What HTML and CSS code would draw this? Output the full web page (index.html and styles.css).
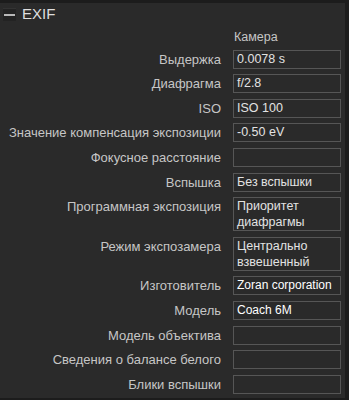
FILE: index.html
```html
<!DOCTYPE html>
<html lang="ru">

<head>
    <meta charset="UTF-8">
    <meta name="viewport" content="width=device-width, initial-scale=1.0">
    <title>EXIF</title>
    <link rel="stylesheet" href="styles.css">
</head>

<body>
    <div class="panel">
        <div class="panel-header">
            <span class="toggle"></span>
            <span class="panel-title">EXIF</span>
        </div>

        <div class="fields">
            <div class="caption">Камера</div>

            <div class="label">Выдержка</div>
            <div class="value">0.0078 s</div>

            <div class="label">Диафрагма</div>
            <div class="value">f/2.8</div>

            <div class="label">ISO</div>
            <div class="value">ISO 100</div>

            <div class="label">Значение компенсация экспозиции</div>
            <div class="value">-0.50 eV</div>

            <div class="label">Фокусное расстояние</div>
            <div class="value"></div>

            <div class="label">Вспышка</div>
            <div class="value">Без вспышки</div>

            <div class="label">Программная экспозиция</div>
            <div class="value multi">Приоритет<br>диафрагмы</div>

            <div class="label">Режим экспозамера</div>
            <div class="value multi">Центрально<br>взвешенный</div>

            <div class="label">Изготовитель</div>
            <div class="value edit">Zoran corporation</div>

            <div class="label">Модель</div>
            <div class="value edit">Coach 6M</div>

            <div class="label">Модель объектива</div>
            <div class="value"></div>

            <div class="label">Сведения о балансе белого</div>
            <div class="value"></div>

            <div class="label">Блики вспышки</div>
            <div class="value"></div>
        </div>
    </div>
</body>

</html>
```

FILE: styles.css
```css
html {
    box-sizing: border-box;
}

*,
*::before,
*::after {
    box-sizing: inherit;
}

body {
    margin: 0;
    padding: 0;
    background-color: #1c1c1c;
    font-family: "Liberation Sans", Arial, sans-serif;
    font-size: 12px;
    color: #c6c6c6;
}

.panel {
    width: 345px;
    height: 395px;
    margin-top: 3px;
    background-color: #2a2a2a;
    overflow: hidden;
}

.panel-header {
    display: flex;
    align-items: center;
    height: 22px;
    padding-left: 3px;
}

.toggle {
    position: relative;
    width: 13px;
    height: 13px;
    background-color: #232323;
    border-top: 1px solid #333;
}

.toggle::after {
    content: '';
    position: absolute;
    left: 1px;
    top: 5px;
    width: 11px;
    height: 2px;
    background-color: #b8b8b8;
}

.panel-title {
    margin-left: 6px;
    font-size: 15px;
    line-height: 16px;
    color: #dedede;
}

.fields {
    display: grid;
    grid-template-columns: 1fr 108px;
    column-gap: 12px;
    row-gap: 5.6px;
    margin-top: 5px;
    padding-right: 4px;
}

.caption {
    grid-column: 2;
    line-height: 14px;
    padding-left: 1px;
    font-size: 12.5px;
}

.label {
    text-align: right;
    font-size: 13px;
    line-height: 19px;
    white-space: nowrap;
    align-self: start;
}

.value {
    min-height: 19px;
    padding: 0 3px;
    border: 1px solid #565656;
    font-size: 12.5px;
    line-height: 17px;
    color: #e2e2e2;
    white-space: nowrap;
}

.value.multi {
    line-height: 16px;
}

.value.edit {
    font-size: 12px;
    color: #ffffff;
}
```
